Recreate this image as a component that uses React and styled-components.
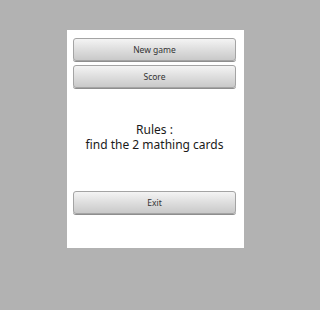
import React from "react";
import styled, { createGlobalStyle } from "styled-components";

const Global = createGlobalStyle`
  html, body { margin: 0; padding: 0; background: #b2b2b2; }
  body { width: 311px; height: 310px; overflow: hidden; font-family: "Noto Sans", "Open Sans", sans-serif; }
`;

const Page = styled.div`
  display: flex;
  justify-content: center;
  padding-top: 30px;
`;

const Panel = styled.div`
  width: 177px;
  height: 218px;
  box-sizing: border-box;
  background: #ffffff;
  padding: 8px 8px 0 6px;
  display: flex;
  flex-direction: column;
`;

const Button = styled.button`
  height: 23px;
  width: 100%;
  margin: 0 0 ${(p) => p.$gap || 0}px 0;
  box-sizing: border-box;
  border: 1px solid #a4a4a4;
  border-radius: 3px;
  background: linear-gradient(#f4f4f4 0%, #e0e0e0 45%, #c9c9c9 100%);
  box-shadow: 0 1px 0 #8e8e8e;
  font-family: "Noto Sans", "Open Sans", sans-serif;
  font-size: 8.5px;
  color: #333333;
  padding: 0;
  cursor: pointer;
`;

const Rules = styled.div`
  height: 103px;
  display: flex;
  flex-direction: column;
  align-items: center;
  justify-content: center;
  font-size: 12px;
  line-height: 15px;
  color: #1a1a1a;
  text-align: center;
  padding-bottom: 6px;
  box-sizing: border-box;
`;

const Line = styled.span`
  display: block;
`;

export default function App() {
  return (
    <>
      <Global />
      <Page>
        <Panel>
          <Button $gap={4}>New game</Button>
          <Button>Score</Button>
          <Rules>
            <Line>Rules :</Line>
            <Line>find the 2 mathing cards</Line>
          </Rules>
          <Button>Exit</Button>
        </Panel>
      </Page>
    </>
  );
}
